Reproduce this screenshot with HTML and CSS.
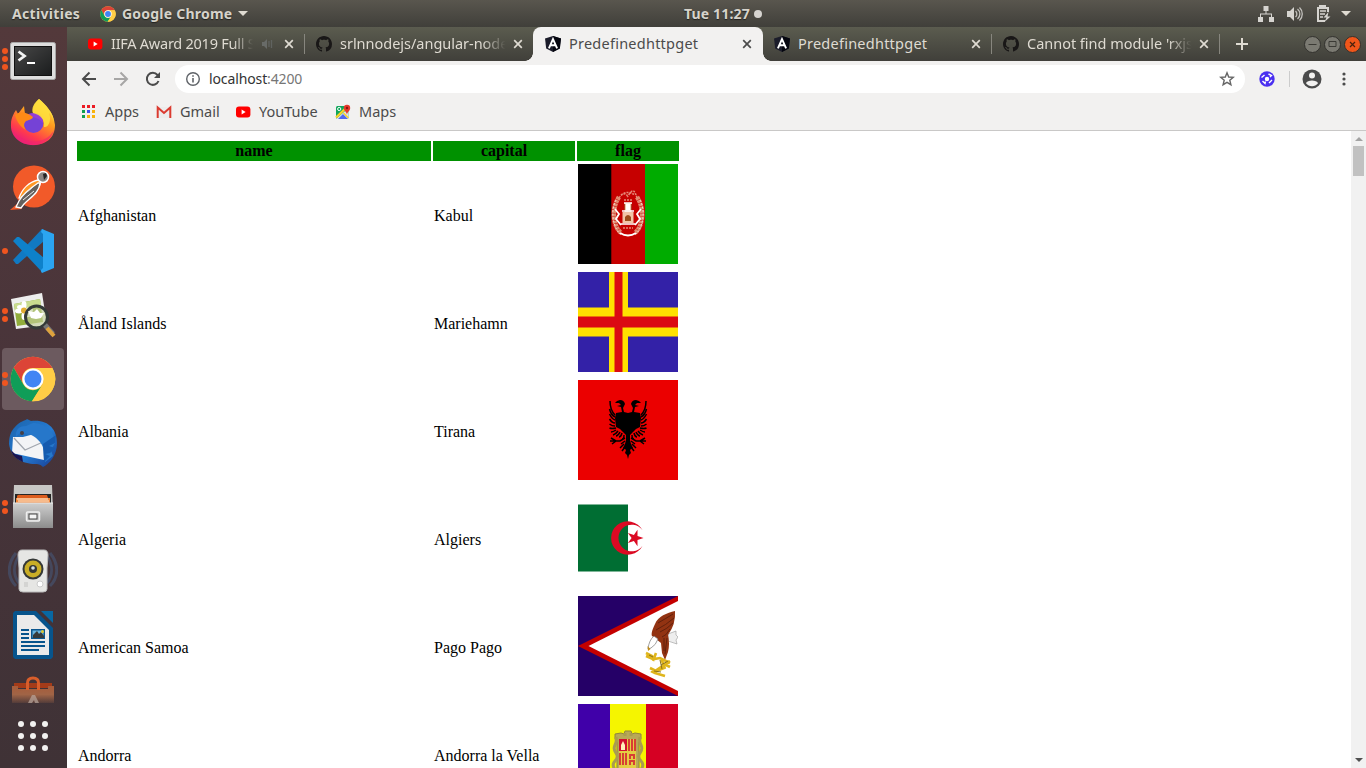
FILE: index.html
```html
<!DOCTYPE html>
<html lang="en">
<head>
<meta charset="utf-8">
<title>Predefinedhttpget</title>
<link rel="stylesheet" href="styles.css">
</head>
<body>
<svg class="defs" width="0" height="0" aria-hidden="true">
  <defs>
    <symbol id="youtube" viewBox="0 0 16 16"><rect x="1" y="2.6" width="14.4" height="11" rx="3" fill="#f00"/><path d="M6.6 5.6v5l4-2.5z" fill="#fff"/></symbol>
    <symbol id="github" viewBox="0 0 16 16"><path fill="#191717" d="M8 0C3.58 0 0 3.58 0 8c0 3.54 2.29 6.53 5.47 7.59.4.07.55-.17.55-.38 0-.19-.01-.82-.01-1.49-2.01.37-2.53-.49-2.69-.94-.09-.23-.48-.94-.82-1.13-.28-.15-.68-.52-.01-.53.63-.01 1.08.58 1.23.82.72 1.21 1.87.87 2.33.66.07-.52.28-.87.51-1.07-1.78-.2-3.64-.89-3.64-3.95 0-.87.31-1.59.82-2.15-.08-.2-.36-1.02.08-2.12 0 0 .67-.21 2.2.82.64-.18 1.32-.27 2-.27s1.36.09 2 .27c1.53-1.04 2.2-.82 2.2-.82.44 1.1.16 1.92.08 2.12.51.56.82 1.27.82 2.15 0 3.07-1.87 3.75-3.65 3.95.29.25.54.73.54 1.48 0 1.07-.01 1.93-.01 2.2 0 .21.15.46.55.38A8.01 8.01 0 0 0 16 8c0-4.42-3.58-8-8-8z"/></symbol>
    <symbol id="angular" viewBox="0 0 16 16"><path d="M8 0l8 2.6-1.2 9.8L8 16l-6.8-3.6L0 2.6z" fill="#1b1c2a"/><path d="M8 0l8 2.6-1.2 9.8L8 16z" fill="#05060f"/><path d="M3.9 12.4L8 3.1l4.1 9.3M5.6 9.3h4.8" fill="none" stroke="#fff" stroke-width="1.9"/></symbol>
    <symbol id="close" viewBox="0 0 10 10"><path d="M1.2 1.2l7.6 7.6M8.800 1.200L1.200 8.800" stroke="currentColor" stroke-width="1.700" fill="none"/></symbol>
    <symbol id="chrome" viewBox="0 0 46 46">
      <circle cx="23" cy="23" r="22.3" fill="#fbc840"/>
      <path d="M3.7 11.8A22.3 22.3 0 0 1 42.3 12H23a11 11 0 0 0-9.600 16.500z" fill="#dc4437"/>
      <path d="M3.7 11.8L13.4 28.5A11 11 0 0 0 32.6 28.5L22 45.3A22.3 22.3 0 0 1 3.7 11.8z" fill="#109d58"/>
      <path d="M32.6 28.5L22 45.3a22.3 22.3 0 0 0 20.3-33.3H23z" fill="#ffcd46"/>
      <circle cx="23" cy="23" r="10.6" fill="#fff"/><circle cx="23" cy="23" r="8.5" fill="#4285f4"/>
    </symbol>
    <linearGradient id="ffox" x1=".8" y1="0" x2=".25" y2="1"><stop offset="0" stop-color="#fff44f"/><stop offset=".4" stop-color="#ff9a1e"/><stop offset=".75" stop-color="#ff3b4c"/><stop offset="1" stop-color="#e31587"/></linearGradient>
    <linearGradient id="silver" x1="0" y1="0" x2="0" y2="1"><stop offset="0" stop-color="#cfcfcf"/><stop offset="1" stop-color="#8c8c8c"/></linearGradient>
    <linearGradient id="bluebird" x1="0" y1="0" x2="1" y2="1"><stop offset="0" stop-color="#1b62aa"/><stop offset=".55" stop-color="#257bd2"/><stop offset="1" stop-color="#173a8f"/></linearGradient>
    <linearGradient id="bag" x1="0" y1="0" x2="0" y2="1"><stop offset="0" stop-color="#a85c3a"/><stop offset=".5" stop-color="#a06446"/><stop offset="1" stop-color="#a06446" stop-opacity=".2"/></linearGradient>
    <linearGradient id="screen" x1="0" y1="0" x2="1" y2="1"><stop offset="0" stop-color="#474747"/><stop offset="1" stop-color="#1b1d1e"/></linearGradient>
  </defs>
</svg>

<header class="panel">
  <span class="panel-activities">Activities</span>
  <span class="panel-app"><svg width="16" height="16"><use href="#chrome"/></svg><span class="panel-appname">Google Chrome</span><i class="caret"></i></span>
  <span class="panel-clock"><span class="panel-time">Tue 11:27</span><i class="clock-dot"></i></span>
  <span class="panel-status">
    <svg width="16" height="16" fill="#d6d4d0"><path d="M5.5 0h5v5h-5zM0 11h5v5H0zM11 11h5v5h-5zM7.5 5h1v3h-1zM2 7.5h12v1H2zM2 8h1v3H2zM13 8h1v3h-1z"/></svg>
    <svg width="16" height="16"><path d="M0 5h3l4-4v14l-4-4H0z" fill="#d6d4d0"/><path d="M8.5 5a4 4 0 0 1 0 6M10.5 3a6.500 6.500 0 0 1 0 10M12.500 1.500a9 9 0 0 1 0 13" fill="none" stroke="#c3c1bd" stroke-width="1.300"/></svg>
    <svg width="16" height="17"><path d="M4 3.500V1h5v2.500M12 7V3H2v13h7" fill="none" stroke="#d6d4d0" stroke-width="2"/><path d="M4 6h6M4 9h5M4 12h3" stroke="#d6d4d0" stroke-width="1.500"/><path d="M12.500 7L7.500 12.500h3L8.500 17l6-5.500h-3z" fill="#d6d4d0"/></svg>
    <i class="caret"></i>
  </span>
</header>

<div class="desktop">
  <nav class="dock">
    <div class="dock-item"><span class="dots"><i></i><i></i><i></i></span>
      <svg width="46" height="46"><rect x=".5" y="6.500" width="45" height="37" rx="2" fill="#dedede" stroke="#a8a8a8"/><rect x="4" y="10" width="38" height="30" fill="#111"/><rect x="5" y="11" width="36" height="28" fill="url(#screen)"/><path d="M8.500 15.500l6 4.500-6 4.500" fill="none" stroke="#f4f4f4" stroke-width="2.800"/><path d="M17 27h8" stroke="#fff" stroke-width="2"/></svg></div>
    <div class="dock-item">
      <svg class="lift" width="46" height="48"><path d="M29 1c6 5 15 14 16 26 0 13-9 20-22 20S0 38 1 26C1 20 4 15 6 12l2 4 6-8 1 8h8c-1-7 2-11 6-15z" fill="url(#ffox)"/><path d="M2 30c5 15 32 20 42 2-5 21-40 20-42-2z" fill="#f0246f" opacity=".6"/><circle cx="23.500" cy="25" r="10" fill="#7542d6"/><path d="M16 18c6-6 18-3 17 7-5-6-10-6-17-7z" fill="#9440d5"/><path d="M5 17c5-4 12-3 18 2-1 3-5 3-7 4-3 3-2 6 0 9-4-2-9-7-11-15z" fill="#ff8a16"/><path d="M29 1c-5 4-8 9-6 14 8 2 12 7 11 14 4 1 8-6 5-14 3 2 4 6 5 9 0-9-9-18-15-23z" fill="#ffe03d" opacity=".85"/></svg></div>
    <div class="dock-item">
      <svg width="46" height="48"><circle cx="24" cy="23.500" r="21" fill="#f15a29"/><path d="M0 47l8-7 4 6z" fill="#f15a29"/><path d="M28 17c-9 2-16 9-19 18l9 1c7-5 12-10 13-18z" fill="#ff9826" stroke="#fff" stroke-width="1.300"/><path d="M30 20c-1 10-9 14-16 21l-3 4-5-1 3-6c4-7 10-12 19-18z" fill="#65605d" stroke="#fff" stroke-width="1.300"/><path d="M11 34l12-10M13 37l11-9" stroke="#ececec" stroke-width="1"/><circle cx="33" cy="14" r="5.500" fill="#8c8683" stroke="#fff" stroke-width="1.500"/><path d="M33 11l3-1 1 3-3 4z" fill="#252525"/></svg></div>
    <div class="dock-item"><span class="dots"><i></i></span>
      <svg class="nudge" width="46" height="46"><path d="M2 32l3 4 2 0L33 13V2L31 1z" fill="#1179c2"/><path d="M2 13l4-4 2 0 25 21v13l-2 1z" fill="#0e81ca"/><path d="M31 1l12 5v34l-12 5c-1-1-1-2-1-3l2-2V6l-2-2z" fill="#2ba5f1"/></svg></div>
    <div class="dock-item"><span class="dots"><i></i><i></i></span>
      <svg width="46" height="48"><path d="M1 8l31-6 5 32-31 4z" fill="#eee"/><path d="M4 13l26-5 3 23-26 4z" fill="#91ad3b"/><path d="M4 13l26-5 1 6-26 7z" fill="#c9db8f"/><g fill="#fff"><ellipse cx="14" cy="14" rx="2.500" ry="4"/><ellipse cx="14" cy="25" rx="2.500" ry="4"/><ellipse cx="9" cy="20" rx="4" ry="2.500"/><ellipse cx="19" cy="19" rx="4" ry="2.500"/><ellipse cx="10" cy="16" rx="3" ry="2"/><ellipse cx="18" cy="24" rx="3" ry="2"/></g><circle cx="14" cy="19.500" r="3" fill="#e1ac32"/><circle cx="26.500" cy="26" r="11" fill="#c3d09b" fill-opacity=".65" stroke="#333938" stroke-width="3"/><path d="M18 20l6 1 3-3 3 4 4 0-3 5-5 1-5-1z" fill="#fff"/><path d="M35 34l8 9" stroke="#777" stroke-width="5"/><path d="M37 37l7 8" stroke="#dfa33d" stroke-width="4"/></svg></div>
    <div class="dock-item active"><span class="dots"><i></i><i></i></span><svg width="46" height="46"><use href="#chrome"/></svg></div>
    <div class="dock-item">
      <svg width="50" height="50"><path d="M7 9C12 3 17 3 19 1l4 2c17-2 26 8 26 22 0 13-8 21-14 24-3-3-5-3-8-3C15 46 3 40 1 26 1 18 3 13 7 9z" fill="url(#bluebird)"/><path d="M5 19l10 0 15-4 5 2 1 25L4 35z" fill="#f3f4f6"/><path d="M6 20l11 12 18-8" fill="none" stroke="#a2a7af" stroke-width="1.300"/><path d="M8 19c-1-8 4-11 10-11l7-3c13 0 22 10 22 20l-4 7 2 6-8 6c0-8-1-15-5-20-5-6-11-9-18-9-3 0-4 2-6 4z" fill="#2677ca"/><path d="M35 26l13-9-1 8-6 3 6 2-5 5-5 1 5 2-6 6z" fill="#165baf"/><circle cx="14" cy="15" r="2" fill="#453f46"/><path d="M3 32l4 4 7 2 1 6C8 41 4 37 3 32z" fill="#1b1450"/></svg></div>
    <div class="dock-item"><span class="dots"><i></i><i></i></span>
      <svg width="44" height="46"><path d="M3 1h38l1 25H2z" fill="#c7c7c5"/><path d="M4 10h36v12H4z" fill="#252525"/><path d="M6 12q1-2 4-1h26l1 3H6z" fill="#dc5c1d"/><path d="M5 14h34v7H5z" fill="#ef863b"/><path d="M6 15h31M7 17h31" stroke="#fff0df" stroke-width="1"/><path d="M2 19h40v25H2z" fill="url(#silver)"/><path d="M2 19h40" stroke="#e8e8e8"/><rect x="15.500" y="28" width="13" height="9" rx="1" fill="#c4c4c4" stroke="#eee" stroke-width="1.500"/><rect x="18" y="30" width="8" height="5" fill="#f4f4f4" stroke="#444"/></svg></div>
    <div class="dock-item">
      <svg width="50" height="46"><g fill="none" stroke="#47628c" stroke-width="3" opacity=".45"><path d="M8 5c-9 11-9 24 0 33M42 5c9 11 9 24 0 33M11 8c-6 9-6 19 0 27M39 8c6 9 6 19 0 27"/></g><path d="M14 2h22q4 0 4 5l-1 13 0 21q0 3-4 3H15q-4 0-4-3V20L10 7q0-5 4-5z" fill="#e6e6e4" stroke="#bbb"/><circle cx="25" cy="21" r="10.500" fill="#353837"/><circle cx="25" cy="21" r="8.500" fill="#c9ad26"/><circle cx="25" cy="21" r="4" fill="#343636"/><circle cx="25" cy="20" r="1.800" fill="#d7e2e5"/><circle cx="32" cy="36" r="3" fill="#fff" stroke="#ccc"/><path d="M16 34h4v5h-4z" fill="#d4d4d2"/></svg></div>
    <div class="dock-item">
      <svg width="40" height="48"><path d="M2 0h21l17 17v29l-2 2H2l-2-2V2z" fill="#07548c"/><path d="M4 4h17l15 15v25H4z" fill="#eaeaea"/><path d="M28 0h12v12z" fill="#0868a3"/><path d="M8 19h8M8 23h8M8 27h8M8 31h24M8 35h24M8 39h18" stroke="#07548c" stroke-width="2"/><path d="M18 18h14v10H18z" fill="#0b568e"/><path d="M19.500 19.500h11v7h-11z" fill="#68b4df"/><path d="M20 27v-3l4-4 2 3 2-2 3 4v2z" fill="#363b3b"/><circle cx="29.500" cy="20.500" r="1.500" fill="#e0c82e"/></svg></div>
    <div class="dock-item cut">
      <svg width="42" height="28"><path d="M2 7h38v5H2z" fill="#a43b19"/><path d="M0 10l6 0v3h30v-3h6v17H0z" fill="url(#bag)"/><path d="M15.500 14V7q0-5 5.500-5t5.500 5v7" fill="none" stroke="#d95e2b" stroke-width="3"/><path d="M20 19h3l4 8h-4l-1-3-2 3h-4z" fill="#b9a79d" opacity=".7"/></svg></div>
    <div class="apps-grid"><i></i><i></i><i></i><i></i><i></i><i></i><i></i><i></i><i></i></div>
  </nav>

  <main class="browser">
    <div class="tabs">
      <div class="tab"><svg class="favicon"><use href="#youtube"/></svg><span class="tab-title fade short">IIFA Award 2019 Full S</span><svg class="audio" width="11" height="10"><path d="M0 3h2l3-3v10L2 7H0z" fill="#686b68"/><path d="M7 2v6M9.500 1v8" stroke="#606360" stroke-width="1.300"/></svg><svg class="x"><use href="#close"/></svg></div>
      <div class="tab sep"><svg class="favicon"><use href="#github"/></svg><span class="tab-title fade">srlnnodejs/angular-node</span><svg class="x"><use href="#close"/></svg></div>
      <div class="tab current"><svg class="favicon"><use href="#angular"/></svg><span class="tab-title wide">Predefinedhttpget</span><svg class="x"><use href="#close"/></svg></div>
      <div class="tab"><svg class="favicon"><use href="#angular"/></svg><span class="tab-title wide">Predefinedhttpget</span><svg class="x"><use href="#close"/></svg></div>
      <div class="tab sep last"><svg class="favicon"><use href="#github"/></svg><span class="tab-title fade">Cannot find module 'rxjs</span><svg class="x"><use href="#close"/></svg></div>
      <div class="newtab"><svg width="12" height="12"><path d="M6 0v12M0 6h12" stroke="#dfdbd2" stroke-width="2"/></svg></div>
      <div class="winbtns">
        <svg width="17" height="17"><circle cx="8.500" cy="8.500" r="8" fill="#7b7a72" stroke="#33322e"/><path d="M4.500 8.500h8" stroke="#3b3a35"/></svg>
        <svg width="17" height="17"><circle cx="8.500" cy="8.500" r="8" fill="#7b7a72" stroke="#33322e"/><path d="M5 5.500h7v5H5z" fill="none" stroke="#3b3a35"/></svg>
        <svg width="17" height="17"><circle cx="8.500" cy="8.500" r="8" fill="#f0561a" stroke="#33322e"/><path d="M6 6l5 5M11 6l-5 5" stroke="#49210c" stroke-width="1.200"/></svg>
      </div>
    </div>

    <div class="toolbar">
      <svg class="nav-back" width="16" height="16"><path d="M15 8H2M8.500 1.500L2 8l6.500 6.500" fill="none" stroke="#4b4b4b" stroke-width="2"/></svg>
      <svg class="nav-fwd" width="16" height="16"><path d="M1 8h13M7.500 1.500L14 8l-6.500 6.500" fill="none" stroke="#a7a6a5" stroke-width="2"/></svg>
      <svg class="nav-reload" width="16" height="16"><path d="M13.500 10A6 6 0 1 1 12.500 4L14 5.500" fill="none" stroke="#4b4b4b" stroke-width="2"/><path d="M15 1v6H9z" fill="#4b4b4b"/></svg>
      <div class="omnibox">
        <svg width="14" height="14"><circle cx="7" cy="7" r="6.300" fill="none" stroke="#5f6368" stroke-width="1.400"/><path d="M7 6v4.500M7 3.300v1.500" stroke="#5f6368" stroke-width="1.600"/></svg>
        <span class="url">localhost<span class="port">:4200</span></span>
        <svg class="star" width="16" height="16"><path d="M8 1.800l1.700 4.200 4.600.3-3.500 2.900 1.100 4.500L8 11.300l-3.900 2.400 1.100-4.500L1.700 6.300 6.300 6z" fill="none" stroke="#666" stroke-width="1.400"/></svg>
      </div>
      <svg class="ext" width="16" height="16"><circle cx="8" cy="8" r="7.700" fill="#4a2ff0"/><circle cx="8" cy="8" r="2.200" fill="#fff"/><path d="M2.500 6.500l3-2.500M9.500 3l3 1.500-1.500 1.500M13 9l-3 3M3.500 10l2.500 2.500.5-2" fill="none" stroke="#fff" stroke-width="1.400"/></svg>
      <i class="divider"></i>
      <svg class="avatar" width="20" height="20"><circle cx="10" cy="10" r="9.500" fill="#4b4b4b"/><circle cx="10" cy="6.500" r="3" fill="#f2f1f0"/><path d="M4 14.200C5 10.600 15 10.600 16 14.200 13 18.200 7 18.200 4 14.200z" fill="#f2f1f0"/></svg>
      <svg width="4" height="14" fill="#4b4b4b"><circle cx="2" cy="2" r="1.600"/><circle cx="2" cy="7" r="1.600"/><circle cx="2" cy="12" r="1.600"/></svg>
    </div>

    <div class="bookmarks">
      <span class="bm bm-apps"><svg width="16" height="16"><path d="M1 1h3v3H1zM6 1h3v3H6zM11 1h3v3h-3z" fill="#ec1c24"/><path d="M1 6h3v3H1zM1 11h3v3H1z" fill="#10a050"/><path d="M6 6h3v3H6z" fill="#3f51f0"/><path d="M11 6h3v3h-3zM11 11h3v3h-3zM6 11h3v3H6z" fill="#f8b30c"/></svg><span>Apps</span></span>
      <span class="bm bm-gmail"><svg width="16" height="16"><path d="M1 3h14v11H1z" fill="#ececec"/><path d="M1.700 14V3.500L8 9l6.300-5.500V14" fill="none" stroke="#db3b30" stroke-width="2"/></svg><span>Gmail</span></span>
      <span class="bm bm-youtube"><svg width="16" height="16"><use href="#youtube"/></svg><span>YouTube</span></span>
      <span class="bm bm-maps"><svg width="16" height="16"><rect x="1" y="2" width="12.500" height="13" rx="1.500" fill="#12a65c"/><path d="M1 15L13.500 4v11z" fill="#dfe5ed"/><path d="M3 15l5-5 5 5z" fill="#5068ee"/><path d="M1 13.500L10 5" stroke="#fbd329" stroke-width="2.400"/><path d="M8.500 9l5 5" stroke="#fbd329" stroke-width="1.500"/><circle cx="4.200" cy="5" r="1.600" fill="none" stroke="#fff"/><path d="M12 11c0-3-3.200-4-3.200-7a3.200 3.200 0 0 1 6.400 0c0 3-3.200 4-3.200 7z" fill="#e5392c"/><circle cx="12" cy="4" r="1.200" fill="#8c1610"/></svg><span>Maps</span></span>
    </div>

    <div class="viewport">
      <div class="page">
        <table>
          <thead><tr><th class="c-name">name</th><th class="c-capital">capital</th><th class="c-flag">flag</th></tr></thead>
          <tbody>
            <tr><td>Afghanistan</td><td>Kabul</td><td><svg class="flag"><path d="M0 0h34v100H0z"/><path d="M33.300 0h34v100h-34z" fill="#c60000"/><path d="M67 0h33v100H67z" fill="#00ac00"/><path d="M41 33C33 45 35 62 43 69M59 33C67 45 65 62 57 69" fill="none" stroke="#e08a70" stroke-width="4.500" stroke-dasharray="3 .5"/><path d="M38 36C32 47 35 64 43 71M62 36C68 47 65 64 57 71" fill="none" stroke="#f6d8cc" stroke-width="1" stroke-dasharray="2 1.500"/><path d="M37 45l4 5-3 5 5 6M63 45l-4 5 3 5-5 6M42 69q8 5 16 0" fill="none" stroke="#fff" stroke-width="1.800"/><path d="M44.500 59V48h2v-9h7v9h2v11z" fill="#f1c5a8"/><path d="M46 39h8M44 47h12M43 60h14" stroke="#fff" stroke-width="1.600"/><path d="M47 57v-4q3-4 6 0v4z" fill="#9c4e1c"/><path d="M46.500 40v6M53.500 40v6" stroke="#a93c22"/><path d="M48 40h4v6h-4z" fill="#fff"/><path d="M41 34q3-5 6-4t2 3 3-4 7 5M43 31q7-5 14 0M46 36h8M45 64h10" fill="none" stroke="#e68a7a" stroke-width="1.500" stroke-dasharray="2 1"/></svg></td></tr>
            <tr><td>Åland Islands</td><td>Mariehamn</td><td><svg class="flag"><path d="M0 0h100v100H0z" fill="#3321a7"/><path d="M31 0h19v100H31zM0 35.500h100v29H0z" fill="#ffe100"/><path d="M36.500 0h8v100h-8zM0 44.500h100v11H0z" fill="#db0a13"/></svg></td></tr>
            <tr><td>Albania</td><td>Tirana</td><td><svg class="flag"><path d="M0 0h100v100H0z" fill="#eb0000"/><g id="eagle-half"><path d="M50 33l-4-1-1-4 2-4q-1-4-5-4l-3 1-2 2 4 0 2 2-4 1 4 1 1 5-6 1-1 5 1 9 4 2 3 3 3 3v5l-1 4-2 4 2 1 1 1-1 3 2 2 1 4z"/><path d="M37 35q-5-5-5-14M37 37q-4-2-5.500-8M37 40q-3-1-5.500-6M37 43q-3 0-5.500-4M37 46q-3 0-5.500-2M38 48q-4 1-6.500 0M38 50q-3 2-5 2M40 51q-2 3-5 4M42 52q-2 4-4 4M44 53q-1 4-3 4M46 55q0 4-2 4M47 58l-5 3-10 0M38 61l-5-3M38 61l-4 3M47 61l-4 3M46 64l-4 4M47 67l-3 4" fill="none" stroke="#000" stroke-width="1.500"/></g><use href="#eagle-half" transform="translate(100 0) scale(-1 1)"/></svg></td></tr>
            <tr><td>Algeria</td><td>Algiers</td><td><svg class="flag"><path d="M0 16.600h50v66.800H0z" fill="#006e33"/><path d="M64.600 42.300A16.700 16.700 0 1 0 64.600 57.700 13.300 13.300 0 1 1 64.600 42.300z" fill="#db0a23"/><path d="M65.500 50l-6 2 0 6.200-3.600-5.100-6 2 3.700-5.100-3.700-5.100 6 2 3.600-5.100 0 6.200z" fill="#db0a23"/></svg></td></tr>
            <tr><td>American Samoa</td><td>Pago Pago</td><td><svg class="flag"><path d="M0 0h100v100H0z" fill="#250067"/><path d="M100 0v100L0 50z" fill="#c40000"/><path d="M100 5v90L10.500 50z" fill="#fff"/><path d="M90 38l8-3 0 4 2 2-2 3 1 4-9-3z" fill="#eee" stroke="#999" stroke-width=".6"/><path d="M97 15c-8 2-17 5-20 13-3 6-4 10-3 12l4 3 5 4 1 10 3 7 3-8q2-8 0-17 8-11 7-24z" fill="#923312"/><path d="M95 18q-8 5-15 9M96 22q-8 7-18 12M95 27q-6 6-13 9M92 33q-4 7-8 8M86 42v13M89 42l-2 16" fill="none" stroke="#5c1e0b" stroke-width=".9"/><path d="M76 40q-5 4-6 13l3-1q5-3 7-9z" fill="#fff" stroke="#777" stroke-width=".7"/><path d="M69.500 50l3 3-2.500 2z" fill="#c08b19"/><path d="M68 57l6 3 2 3 6-1 10 5M68 60l7 3M72 72l6 3 8-3M73 75l4 2 10 3M92 65l-15 10M83 62l4 11M78 57l-3 8M84 67l8 4" fill="none" stroke="#dfb51c" stroke-width="2.600"/><path d="M71 59l4 2M83 69l7-4M76 75l7 1M82 64l2 9" fill="none" stroke="#88701f" stroke-width="1"/></svg></td></tr>
            <tr><td>Andorra</td><td>Andorra la Vella</td><td><svg class="flag"><path d="M0 0h33v100H0z" fill="#4000a9"/><path d="M32 0h36v100H32z" fill="#f5f500"/><path d="M68 0h32v100H68z" fill="#d60023"/><path d="M37 30l6-1 3 1 1-3h6l1 3 3-1 6 1 0 5-2 3v30H39V38l-2-3z" fill="#b8a957" stroke="#90863c"/><path d="M38 33q1 4-1 8t1 8-1 8 1 10M62 33q-1 4 1 8t-1 8 1 8-1 10M47 29v3M53 29v3" fill="none" stroke="#aa9c50" stroke-width="3"/><path d="M41 35h17v33H41z" fill="#e4cd43"/><path d="M41 35h8v12h-8z" fill="#d2112f"/><path d="M43 46l0-5 2-4 2 4 0 5z" fill="#fff2bb"/><path d="M51 35v12M54 35v12M57 35v12M42 49v12M45 49v12M48 49v12" stroke="#d2112f" stroke-width="1.500"/><path d="M51 51h6M52 52v3M56 52v3M51 57h6M52 58v3M56 58v3" stroke="#d2112f" stroke-width="1.500"/></svg></td></tr>
          </tbody>
        </table>
      </div>
      <div class="scrollbar"><i class="arrow up"></i><i class="thumb"></i><i class="arrow down"></i></div>
    </div>
  </main>
</div>
</body>
</html>
```
FILE: styles.css
```css
* { box-sizing: border-box; }
body { margin: 0; width: 1366px; height: 768px; overflow: hidden; background: #fff; }
svg { display: block; flex: none; }
.defs { position: absolute; }

.panel { position: relative; height: 27px; display: flex; align-items: center; justify-content: space-between; padding: 0 15px 0 12px; background: linear-gradient(#59564e, #403f3a); color: #d6d3cb; font: 700 14px/27px "Noto Sans", sans-serif; text-shadow: 0 1px 1px #22211e; }
.panel-activities { width: 68px; letter-spacing: .32px; }
.panel-app { display: flex; align-items: center; gap: 6px; margin-left: 20px; margin-right: auto; }
.panel-appname { width: 110px; letter-spacing: .22px; white-space: nowrap; }
.caret { width: 0; height: 0; border: 5px solid transparent; border-top-color: #dfdbd2; border-bottom: 0; }
.panel-clock { position: absolute; left: 684px; display: flex; align-items: center; gap: 4px; }
.panel-time { width: 66px; letter-spacing: .15px; white-space: nowrap; }
.clock-dot { width: 8px; height: 8px; border-radius: 50%; background: #d6d4d0; }
.panel-status { display: flex; align-items: center; gap: 13px; }
.panel-status .caret { margin-left: -4px; }

.desktop { display: flex; height: 741px; }
.dock { width: 67px; flex: none; background: linear-gradient(#53393b, #48343a 50%, #3f3236); display: flex; flex-direction: column; overflow: hidden; }
.dock-item { position: relative; height: 64px; flex: none; display: flex; align-items: center; justify-content: center; padding-right: 1px; }
.dock-item.active::before { content: ""; position: absolute; left: 2px; top: 1px; width: 62px; height: 62px; border-radius: 4px; background: #6c5a5f; }
.dock-item svg { position: relative; }
.dock-item .lift { margin-bottom: 2px; }
.dock-item .nudge { margin-left: 2px; }
.dock-item.cut { height: 37px; align-items: flex-start; padding-top: 9px; }
.dots { position: absolute; z-index: 1; left: 2px; top: 0; height: 64px; display: flex; flex-direction: column; justify-content: center; gap: 2.400px; }
.dots i { width: 6px; height: 6px; border-radius: 50%; background: #f0551f; }
.apps-grid { display: grid; grid-template-columns: repeat(3, 6px); gap: 6px; margin: 17px 0 0 18px; }
.apps-grid i { width: 6px; height: 6px; border-radius: 50%; background: #f2f1f0; }

.browser { flex: 1; display: flex; flex-direction: column; min-width: 0; }
.tabs { height: 34px; display: flex; align-items: stretch; padding-left: 8px; background: linear-gradient(#5b5c4f, #403f3a); font: 14.500px/32px "Noto Sans", sans-serif; color: #dfdbd2; }
.tab { position: relative; width: 229px; flex: none; display: flex; align-items: center; padding: 0 10px 0 12px; }
.favicon { width: 16px; height: 16px; margin-right: 8px; }
.tab-title { flex: 1; min-width: 0; height: 34px; overflow: hidden; white-space: nowrap; }
.wide { letter-spacing: .24px; }
.fade { margin-right: 4px; letter-spacing: -.02px; -webkit-mask-image: linear-gradient(90deg, #000 84%, transparent 98%); mask-image: linear-gradient(90deg, #000 84%, transparent 98%); }
.short { margin-right: 6px; letter-spacing: -.25px; }
.audio { margin-right: 11px; }
.x { width: 10px; height: 10px; }
.tab.sep::before, .newtab::before { content: ""; position: absolute; left: 0; top: 7px; width: 1px; height: 20px; background: #87867e; }
.current { background: #f2f1f0; color: #4b4b4b; border-radius: 8px 8px 0 0; width: 230px; margin-right: -1px; z-index: 1; }
.current .x { margin-right: 1px; }
.current::before, .current::after { content: ""; position: absolute; bottom: 0; width: 8px; height: 8px; }
.current::before { left: -8px; background: radial-gradient(circle at 0 0, transparent 7.500px, #f2f1f0 8px); }
.current::after { right: -8px; background: radial-gradient(circle at 100% 0, transparent 7.500px, #f2f1f0 8px); }
.last { width: 228px; }
.newtab { position: relative; width: 40px; display: flex; align-items: center; padding-left: 17px; }
.winbtns { display: flex; align-items: center; gap: 3px; margin-left: auto; padding-right: 5px; }

.toolbar { height: 36px; display: flex; align-items: center; padding: 0 20px 0 14px; background: #f2f1f0; }
.nav-back, .nav-fwd { margin-right: 16px; }
.nav-reload { margin-right: 14px; }
.omnibox { width: 1070px; flex: none; height: 28px; border-radius: 14px; background: #fff; display: flex; align-items: center; padding: 0 10px 0 11px; }
.url { margin-left: 9px; font: 14px/28px "Noto Sans", sans-serif; color: #333; letter-spacing: -.12px; }
.port { color: #767676; }
.star { margin-left: auto; }
.ext { margin-left: 14px; }
.divider { width: 1px; height: 16px; margin: 0 12px 0 14px; background: #ccc; }
.avatar { margin-right: 20px; }

.bookmarks { height: 34px; display: flex; align-items: center; padding: 0 0 4px 14px; background: #f2f1f0; border-bottom: 1px solid #c9c8c7; font: 14.500px/20px "Noto Sans", sans-serif; color: #4b4b4b; }
.bm { display: flex; align-items: center; gap: 8px; white-space: nowrap; }
.bm span { margin-bottom: 2px; }
.bm-apps { width: 75px; }
.bm-gmail { width: 79px; }
.bm-youtube { width: 100px; }

.viewport { flex: 1; display: flex; min-height: 0; background: #fff; }
.page { flex: 1; padding: 8px; overflow: hidden; }
table { border-collapse: separate; border-spacing: 2px; font: 16px/18px "Liberation Serif", serif; color: #000; }
th, td { padding: 1px; vertical-align: middle; }
th { background: #009100; font-weight: bold; }
td { height: 106px; }
.c-name { width: 354px; }
.c-capital { width: 142px; }
.c-flag { width: 102px; }
.flag { width: 100px; height: 100px; margin-bottom: 4px; }
.scrollbar { width: 15px; background: #f1f1f1; display: flex; flex-direction: column; align-items: center; }
.arrow { border: 4px solid transparent; }
.up { border-bottom-color: #a3a3a3; border-top: 0; margin: 6px 0 5px; }
.thumb { width: 11px; height: 30px; background: #c1c1c1; }
.down { border-top-color: #505050; border-bottom: 0; margin-top: auto; margin-bottom: 6px; }
```
